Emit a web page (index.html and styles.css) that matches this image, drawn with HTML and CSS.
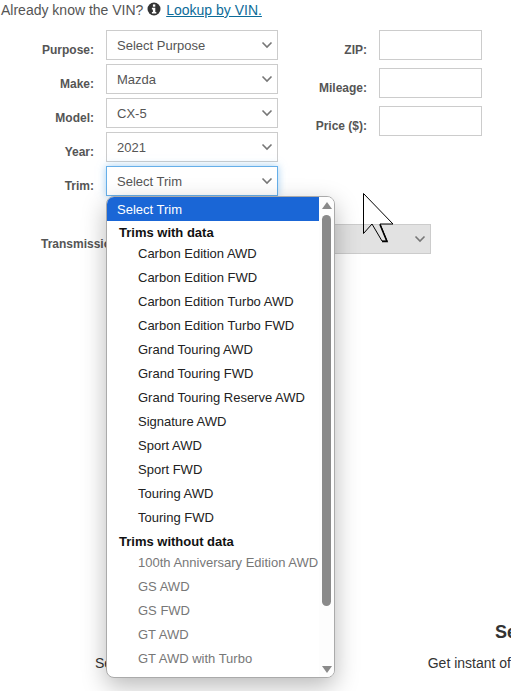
FILE: index.html
```html
<!DOCTYPE html>
<html lang="en">
<head>
  <meta charset="UTF-8">
  <meta name="viewport" content="width=device-width, initial-scale=1.0">
  <title>Vehicle details</title>
  <link rel="stylesheet" href="styles.css">
</head>
<body>

<p class="vin-line">Already know the VIN?
  <svg class="info-icon" viewBox="0 0 14 14" width="14" height="14">
    <circle cx="7" cy="7" r="6.5" fill="#333"/>
    <rect x="5.9" y="2.4" width="2.4" height="2.3" fill="#fff"/>
    <path d="M4.9 5.8h3.4v4.2h1v1.6H4.9V10h1V7.4h-1z" fill="#fff"/>
  </svg>
  <a href="#">Lookup by VIN.</a>
</p>

<div class="form">
  <div class="col-left">
    <div class="row">
      <label>Purpose:</label>
      <div class="select">Select Purpose
        <svg class="chevron" viewBox="0 0 12 8" width="12" height="8"><path d="M1.5 1.5 6 6l4.5-4.5" fill="none" stroke="#777" stroke-width="1.6"/></svg>
      </div>
    </div>
    <div class="row">
      <label>Make:</label>
      <div class="select">Mazda
        <svg class="chevron" viewBox="0 0 12 8" width="12" height="8"><path d="M1.5 1.5 6 6l4.5-4.5" fill="none" stroke="#777" stroke-width="1.6"/></svg>
      </div>
    </div>
    <div class="row">
      <label>Model:</label>
      <div class="select">CX-5
        <svg class="chevron" viewBox="0 0 12 8" width="12" height="8"><path d="M1.5 1.5 6 6l4.5-4.5" fill="none" stroke="#777" stroke-width="1.6"/></svg>
      </div>
    </div>
    <div class="row">
      <label>Year:</label>
      <div class="select">2021
        <svg class="chevron" viewBox="0 0 12 8" width="12" height="8"><path d="M1.5 1.5 6 6l4.5-4.5" fill="none" stroke="#777" stroke-width="1.6"/></svg>
      </div>
    </div>
    <div class="row">
      <label>Trim:</label>
      <div class="select focused">Select Trim
        <svg class="chevron" viewBox="0 0 12 8" width="12" height="8"><path d="M1.5 1.5 6 6l4.5-4.5" fill="none" stroke="#777" stroke-width="1.6"/></svg>
      </div>
    </div>
  </div>
  <div class="col-right">
    <div class="row-right"><label>ZIP:</label><input type="text"></div>
    <div class="row-right"><label>Mileage:</label><input type="text"></div>
    <div class="row-right"><label>Price ($):</label><input type="text"></div>
  </div>
</div>

<div class="trans-row">
  <label>Transmission:</label>
  <div class="select disabled">
    <svg class="chevron" viewBox="0 0 12 8" width="12" height="8"><path d="M1.5 1.5 6 6l4.5-4.5" fill="none" stroke="#777" stroke-width="1.6"/></svg>
  </div>
</div>

<div class="promo">
  <h3 class="promo-title">Se</h3>
  <div class="promo-text">
    <span class="promo-left">Se</span>
    <span class="promo-right">Get instant of</span>
  </div>
</div>

<div class="dropdown">
  <div class="list">
    <div class="opt selected">Select Trim</div>
    <div class="group">Trims with data</div>
    <div class="opt sub">Carbon Edition AWD</div>
    <div class="opt sub">Carbon Edition FWD</div>
    <div class="opt sub">Carbon Edition Turbo AWD</div>
    <div class="opt sub">Carbon Edition Turbo FWD</div>
    <div class="opt sub">Grand Touring AWD</div>
    <div class="opt sub">Grand Touring FWD</div>
    <div class="opt sub">Grand Touring Reserve AWD</div>
    <div class="opt sub">Signature AWD</div>
    <div class="opt sub">Sport AWD</div>
    <div class="opt sub">Sport FWD</div>
    <div class="opt sub">Touring AWD</div>
    <div class="opt sub">Touring FWD</div>
    <div class="group second">Trims without data</div>
    <div class="opt sub off">100th Anniversary Edition AWD</div>
    <div class="opt sub off">GS AWD</div>
    <div class="opt sub off">GS FWD</div>
    <div class="opt sub off">GT AWD</div>
    <div class="opt sub off">GT AWD with Turbo</div>
  </div>
  <div class="scrollbar">
    <svg viewBox="0 0 10 7" width="10" height="7"><path d="M5 0 10 7H0z" fill="#8a8a8a"/></svg>
    <div class="track"><div class="thumb"></div></div>
    <svg viewBox="0 0 10 7" width="10" height="7"><path d="M0 0h10L5 7z" fill="#8a8a8a"/></svg>
  </div>
</div>

<svg class="cursor" viewBox="0 0 31 51" width="31" height="51">
  <path d="M.5.5v40L9 31l10 17h5l-7-17h13z" fill="none" stroke="#000"/>
  <path d="M19 48.5h5l-7-17" fill="none" stroke="#000" stroke-width="1.6"/>
</svg>

</body>
</html>
```

FILE: styles.css
```css
html, body {
  height: 100%;
}
body {
  margin: 0;
  width: 511px;
  height: 691px;
  overflow: hidden;
  position: relative;
  font-family: "Liberation Sans", Arial, sans-serif;
  font-size: 13px;
  color: #555;
  background: #fff;
}
.vin-line {
  margin: 0;
  padding: 2px 0 0 1px;
  height: 30px;
  box-sizing: border-box;
  font-size: 14px;
  line-height: 16px;
  color: #555;
}
.info-icon {
  vertical-align: -1px;
}
.vin-line a {
  color: #0d6c99;
  margin-left: 1px;
}
.form {
  display: flex;
}
.col-left {
  display: flex;
  flex-direction: column;
  gap: 4px;
  width: 278px;
}
.row {
  display: flex;
  gap: 12px;
}
.row label {
  width: 94px;
  text-align: right;
  padding-top: 13px;
}
label {
  font-size: 12px;
  font-weight: bold;
  color: #555;
  line-height: 14px;
}
.select {
  position: relative;
  width: 172px;
  height: 30px;
  box-sizing: border-box;
  border: 1px solid #ccc;
  padding: 0 10px;
  line-height: 30px;
  background: #fff;
}
.focused {
  border-color: #66afe9;
  box-shadow: 0 0 8px rgba(102, 175, 233, 0.6);
}
.chevron {
  position: absolute;
  right: 4px;
  top: 10px;
}
.col-right {
  display: flex;
  flex-direction: column;
  gap: 8px;
}
.row-right {
  display: flex;
  gap: 12px;
}
.row-right label {
  width: 89px;
  text-align: right;
  padding-top: 13px;
}
.row-right input {
  width: 103px;
  height: 30px;
  box-sizing: border-box;
  border: 1px solid #ccc;
  padding: 0;
  margin: 0;
  background: #fff;
}
.trans-row {
  display: flex;
  gap: 10px;
  margin-top: 28px;
  padding-left: 41px;
}
.trans-row label {
  padding-top: 13px;
}
.disabled {
  width: 299px;
  background: #e2e2e2;
}
.promo {
  margin-top: 367px;
}
.promo-title {
  margin: 0;
  padding-left: 495px;
  font-size: 18px;
  line-height: 22px;
  color: #333;
  white-space: nowrap;
}
.promo-text {
  display: flex;
  margin-top: 12px;
  font-size: 14px;
  color: #333;
  white-space: nowrap;
}
.promo-left {
  margin-left: 95px;
  width: 333px;
}
.dropdown {
  position: absolute;
  left: 106px;
  top: 196px;
  width: 229px;
  height: 482px;
  box-sizing: border-box;
  border: 1px solid #aaa;
  border-radius: 8px;
  background: #fff;
  box-shadow: 0 8px 24px rgba(0, 0, 0, 0.28);
  display: flex;
  overflow: hidden;
}
.list {
  width: 212px;
  color: #222;
  white-space: nowrap;
}
.opt, .group {
  height: 24px;
  line-height: 26px;
  padding-left: 10px;
}
.selected {
  background: #1a66d6;
  color: #fff;
}
.group {
  padding-left: 12px;
  font-weight: bold;
  color: #111;
  height: 20px;
  line-height: 24px;
}
.second {
  height: 21px;
  line-height: 26px;
}
.sub {
  padding-left: 31px;
}
.off {
  color: #777;
}
.scrollbar {
  width: 15px;
  display: flex;
  flex-direction: column;
  align-items: center;
  padding: 5px 0 4px;
  box-sizing: border-box;
  background: #fdfdfd;
}
.track {
  flex: 1;
}
.thumb {
  width: 9px;
  height: 391px;
  margin-top: 6px;
  border-radius: 5px;
  background: #8a8a8a;
}
.cursor {
  position: absolute;
  left: 363px;
  top: 193px;
}
```
